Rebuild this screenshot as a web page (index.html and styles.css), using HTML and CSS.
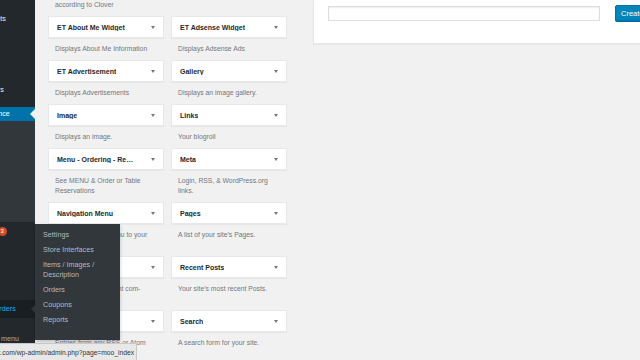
FILE: index.html
```html
<!DOCTYPE html>
<html lang="en">
<head>
    <meta charset="UTF-8">
    <meta name="viewport" content="width=device-width, initial-scale=1.0">
    <title>Widgets</title>
    <link rel="stylesheet" href="styles.css">
</head>
<body>
    <div class="admin">
        <ul class="adminmenu">
            <li class="menu-item item-comments"><span class="label">Comments</span></li>
            <li class="menu-item item-gap"></li>
            <li class="menu-item item-cal"><span class="label">Calendars</span></li>
            <li class="menu-item current"><span class="label">Appearance</span></li>
            <li class="submenu-bg"></li>
            <li class="menu-item item-plugins"><span class="label">Plugins <span class="count">3</span></span></li>
            <li class="menu-item item-small"><span class="label">Users</span></li>
            <li class="menu-item item-small"><span class="label">Tools</span></li>
            <li class="menu-item item-small"><span class="label">Settings</span></li>
            <li class="menu-item opensub">
                <span class="label">Clover Orders</span>
                <ul class="flyout">
                    <li>Settings</li>
                    <li>Store Interfaces</li>
                    <li>Items / Images / Description</li>
                    <li>Orders</li>
                    <li>Coupons</li>
                    <li>Reports</li>
                </ul>
            </li>
            <li class="menu-item item-spacer"></li>
            <li class="menu-item item-plugins collapse"><span class="label">Collapse menu</span></li>
        </ul>

        <div class="content">
            <div class="widget-list">
                <div class="widget">
                    <div class="widget-top"><span class="title">Clover Store Menu</span><span class="arrow"></span></div>
                    <div class="desc">Displays your store items according to Clover</div>
                </div>
                <div class="widget">
                    <div class="widget-top"><span class="title">Clover Categories</span><span class="arrow"></span></div>
                    <div class="desc">Displays store categories</div>
                </div>

                <div class="widget">
                    <div class="widget-top"><span class="title">ET About Me Widget</span><span class="arrow"></span></div>
                    <div class="desc">Displays About Me Information</div>
                </div>
                <div class="widget">
                    <div class="widget-top"><span class="title">ET Adsense Widget</span><span class="arrow"></span></div>
                    <div class="desc">Displays Adsense Ads</div>
                </div>

                <div class="widget">
                    <div class="widget-top"><span class="title">ET Advertisement</span><span class="arrow"></span></div>
                    <div class="desc">Displays Advertisements</div>
                </div>
                <div class="widget">
                    <div class="widget-top"><span class="title">Gallery</span><span class="arrow"></span></div>
                    <div class="desc">Displays an image gallery.</div>
                </div>

                <div class="widget">
                    <div class="widget-top"><span class="title">Image</span><span class="arrow"></span></div>
                    <div class="desc">Displays an image.</div>
                </div>
                <div class="widget">
                    <div class="widget-top"><span class="title">Links</span><span class="arrow"></span></div>
                    <div class="desc">Your blogroll</div>
                </div>

                <div class="widget">
                    <div class="widget-top"><span class="title">Menu - Ordering - Reservations</span><span class="arrow"></span></div>
                    <div class="desc">See MENU &amp; Order or Table Reservations</div>
                </div>
                <div class="widget">
                    <div class="widget-top"><span class="title">Meta</span><span class="arrow"></span></div>
                    <div class="desc">Login, RSS, &amp; WordPress.org links.</div>
                </div>

                <div class="widget">
                    <div class="widget-top"><span class="title">Navigation Menu</span><span class="arrow"></span></div>
                    <div class="desc">Add a navigation menu to your sidebar.</div>
                </div>
                <div class="widget">
                    <div class="widget-top"><span class="title">Pages</span><span class="arrow"></span></div>
                    <div class="desc">A list of your site&rsquo;s Pages.</div>
                </div>

                <div class="widget">
                    <div class="widget-top"><span class="title">Recent Comments</span><span class="arrow"></span></div>
                    <div class="desc">Your site&rsquo;s most recent com&shy;ments.</div>
                </div>
                <div class="widget">
                    <div class="widget-top"><span class="title">Recent Posts</span><span class="arrow"></span></div>
                    <div class="desc">Your site&rsquo;s most recent Posts.</div>
                </div>

                <div class="widget">
                    <div class="widget-top"><span class="title">RSS</span><span class="arrow"></span></div>
                    <div class="desc">Entries from any RSS or Atom feed.</div>
                </div>
                <div class="widget">
                    <div class="widget-top"><span class="title">Search</span><span class="arrow"></span></div>
                    <div class="desc">A search form for your site.</div>
                </div>
            </div>

            <div class="holder">
                <input class="name-input" type="text">
                <button class="button-primary">Create</button>
            </div>
        </div>
    </div>

    <div class="statusbar"><span>localhost.com/wp-admin/admin.php?page=moo_index</span></div>
</body>
</html>
```

FILE: styles.css
```css
html, body {
    margin: 0;
    height: 360px;
    overflow: hidden;
}

body {
    font-family: "Liberation Sans", Arial, sans-serif;
    background-color: #f1f1f1;
    color: #444;
}

.admin {
    display: flex;
    height: 360px;
}

/* left admin menu, scrolled so only its right edge shows */
.adminmenu {
    list-style: none;
    margin: 0;
    padding: 0;
    width: 35px;
    flex: none;
    background-color: #23282d;
    font-size: 7.2px;
    color: #eee;
}

.menu-item {
    position: relative;
    display: flex;
    align-items: center;
    white-space: nowrap;
}

.menu-item .label {
    margin-left: -29px;
    line-height: 10px;
}

.item-comments { height: 38px; }
.item-gap { height: 34px; }
.item-cal { height: 35px; }
.item-plugins { height: 18px; }
.item-small { height: 20px; }
.item-spacer { height: 12px; }

.menu-item.current {
    height: 14px;
    background-color: #0073aa;
    color: #fff;
}

.menu-item.current::after {
    content: "";
    position: absolute;
    right: 0;
    top: 2px;
    border: 5px solid transparent;
    border-right-color: #f1f1f1;
    border-left-width: 0;
}

.submenu-bg {
    height: 101px;
    background-color: #32373c;
}

.count {
    display: inline-block;
    min-width: 9px;
    height: 9px;
    line-height: 9px;
    margin-left: 1px;
    border-radius: 5px;
    background-color: #d54e21;
    color: #fff;
    font-size: 6px;
    text-align: center;
    vertical-align: middle;
}

.opensub {
    height: 18px;
    background-color: #191e23;
    color: #00b9eb;
}

.opensub::after {
    content: "";
    position: absolute;
    right: 0;
    top: 5px;
    border: 4px solid transparent;
    border-right-color: #32373c;
    border-left-width: 0;
}

.flyout {
    position: absolute;
    left: 35px;
    top: -76px;
    width: 77px;
    margin: 0;
    padding: 3px 0 13px 8px;
    list-style: none;
    background-color: #32373c;
    color: #b4b9be;
    white-space: normal;
    box-shadow: 0 2px 4px rgba(0,0,0,0.2);
    z-index: 5;
}

.flyout li {
    padding: 2.5px 0;
    line-height: 10px;
    width: 60px;
}

.collapse {
    color: #aaa;
}

/* main area */
.content {
    display: flex;
    align-items: flex-start;
    padding-left: 13px;
}

.widget-list {
    display: grid;
    grid-template-columns: 116px 116px;
    column-gap: 7px;
    margin-top: -38px;
    width: 239px;
    flex: none;
}

.widget-top {
    display: flex;
    align-items: center;
    justify-content: space-between;
    height: 22px;
    box-sizing: border-box;
    padding: 0 8px;
    background-color: #fff;
    border: 1px solid #e8e8e8;
    box-shadow: 0 1px 1px rgba(0,0,0,0.04);
}

.title {
    max-width: 77px;
    overflow: hidden;
    white-space: nowrap;
    text-overflow: ellipsis;
    font-size: 7px;
    font-weight: bold;
    color: #23282d;
}

.arrow {
    flex: none;
    width: 0;
    height: 0;
    border-left: 2.5px solid transparent;
    border-right: 2.5px solid transparent;
    border-top: 3px solid #72777c;
}

.desc {
    padding: 6px 9px 6px 7px;
    font-size: 6.8px;
    line-height: 10px;
    color: #72777c;
}

.holder {
    display: flex;
    align-items: flex-start;
    gap: 15px;
    flex: none;
    width: 360px;
    margin-left: 26px;
    padding: 5px 14px 22px;
    background-color: #fff;
    border: 1px solid #e5e5e5;
    border-top: none;
    box-shadow: 0 1px 1px rgba(0,0,0,0.04);
}

.name-input {
    width: 272px;
    height: 15px;
    margin: 1px 0 0;
    padding: 0;
    box-sizing: border-box;
    border: 1px solid #ddd;
    box-shadow: inset 0 1px 2px rgba(0,0,0,0.07);
    background-color: #fff;
}

.button-primary {
    flex: none;
    height: 16px;
    padding: 0 5px;
    font-family: "Liberation Sans", Arial, sans-serif;
    font-size: 7.5px;
    color: #fff;
    background-color: #0085ba;
    border: 1px solid #0073aa;
    border-radius: 2px;
    box-shadow: 0 1px 0 #006799;
}

/* browser link preview in the corner */
.statusbar {
    position: fixed;
    left: 0;
    bottom: 0;
    width: 134px;
    height: 16px;
    display: flex;
    align-items: center;
    justify-content: flex-end;
    overflow: hidden;
    padding-right: 2px;
    background-color: #e8e8e8;
    border-top: 1px solid #c8c8c8;
    border-right: 1px solid #c8c8c8;
    border-top-right-radius: 2px;
    font-size: 6.7px;
    color: #333;
    white-space: nowrap;
    z-index: 10;
}

.statusbar span {
    flex: none;
}
```
